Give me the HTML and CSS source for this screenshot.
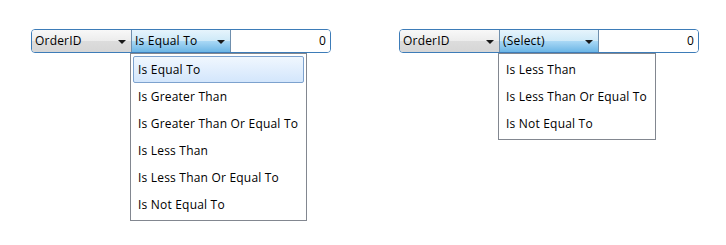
FILE: index.html
```html
<!DOCTYPE html>
<html>
<head>
<meta charset="utf-8">
<link rel="stylesheet" href="styles.css">
</head>
<body>
<div class="page">
  <div class="group">
    <div class="filter">
      <div class="combo combo-field"><span class="label">OrderID</span><span class="arrow"></span></div>
      <div class="combo combo-op"><span class="label">Is Equal To</span><span class="arrow"></span></div>
      <div class="value">0</div>
    </div>
    <ul class="dropdown dropdown-wide">
      <li class="item selected">Is Equal To</li>
      <li class="item">Is Greater Than</li>
      <li class="item">Is Greater Than Or Equal To</li>
      <li class="item">Is Less Than</li>
      <li class="item">Is Less Than Or Equal To</li>
      <li class="item">Is Not Equal To</li>
    </ul>
  </div>
  <div class="group">
    <div class="filter">
      <div class="combo combo-field"><span class="label">OrderID</span><span class="arrow"></span></div>
      <div class="combo combo-op"><span class="label">(Select)</span><span class="arrow"></span></div>
      <div class="value">0</div>
    </div>
    <ul class="dropdown dropdown-narrow">
      <li class="item">Is Less Than</li>
      <li class="item">Is Less Than Or Equal To</li>
      <li class="item">Is Not Equal To</li>
    </ul>
  </div>
</div>
</body>
</html>
```

FILE: styles.css
```css
html, body {
  margin: 0;
  padding: 0;
  background: #ffffff;
}
body {
  font-family: "Open Sans", "Noto Sans", "DejaVu Sans", sans-serif;
  font-size: 12px;
  letter-spacing: 0.2px;
  color: #000000;
}
.page {
  display: flex;
  align-items: flex-start;
  gap: 68px;
  padding: 29px 0 0 31px;
}
.group {
  display: flex;
  flex-direction: column;
  width: 300px;
}
.filter {
  display: flex;
  width: 298px;
  height: 22px;
  border: 1px solid #3d7cb8;
  border-radius: 4px;
}
.combo {
  display: flex;
  align-items: center;
  justify-content: space-between;
  padding: 0 5px 0 3px;
  box-sizing: border-box;
  border-right: 1px solid #6f8fad;
}
.combo-field {
  width: 100px;
  border-radius: 3px 0 0 3px;
  background: linear-gradient(#f8f8f8 0%, #ececec 50%, #dcdcdc 51%, #d6d6d6 100%);
}
.combo-op {
  width: 99px;
  background: linear-gradient(#e6f4fc 0%, #cde9f8 50%, #a9d8f5 51%, #6cb6e6 100%);
}
.label {
  line-height: 22px;
  white-space: nowrap;
}
.arrow {
  width: 0;
  height: 0;
  border-left: 4px solid transparent;
  border-right: 4px solid transparent;
  border-top: 4px solid #1a1a1a;
  margin-top: 1px;
}
.value {
  flex: 1;
  background: #ffffff;
  border-radius: 0 3px 3px 0;
  text-align: right;
  line-height: 22px;
  padding-right: 4px;
}
.dropdown {
  margin: 0 0 0 99px;
  padding: 2px 2px 2px 2px;
  list-style: none;
  background: #ffffff;
  border: 1px solid #828790;
  box-sizing: border-box;
}
.dropdown-wide {
  width: 177px;
}
.dropdown-narrow {
  width: 158px;
}
.item {
  height: 27px;
  line-height: 25px;
  padding-left: 4px;
  white-space: nowrap;
  box-sizing: border-box;
  border: 1px solid transparent;
  border-radius: 2px;
}
.item.selected {
  border-color: #7da2ce;
  background: linear-gradient(#f0f7fe, #d3e6fc);
}
```
